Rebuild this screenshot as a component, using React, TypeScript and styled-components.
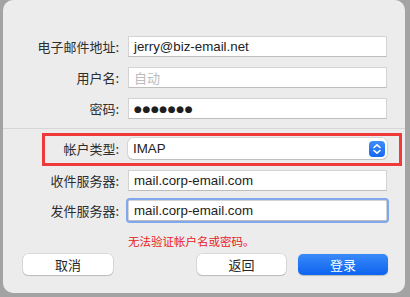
import styled, { createGlobalStyle } from "styled-components";

const GlobalStyle = createGlobalStyle`
  html, body {
    margin: 0;
    padding: 0;
    background: #a3a3a3;
  }
  body {
    font-family: "Liberation Sans", "Noto Sans CJK SC", sans-serif;
    font-size: 13px;
    color: #262626;
  }
`;

const Window = styled.div`
  width: 402px;
  height: 293px;
  margin-left: 3px;
  box-sizing: border-box;
  background: #ececec;
  border-radius: 10px;
  padding-top: 36px;
  display: flex;
  flex-direction: column;
`;

const Group = styled.div`
  display: flex;
  flex-direction: column;
  gap: ${(p: { gap: number }) => p.gap}px;
`;

const Row = styled.div<{ padRight?: number }>`
  display: grid;
  grid-template-columns: 1fr 259px;
  column-gap: 9px;
  align-items: center;
  padding-right: ${(p) => p.padRight ?? 18}px;
`;

const Label = styled.div`
  text-align: right;
  font-family: "Noto Sans CJK SC", sans-serif;
  font-size: 13px;
  line-height: 21px;
  color: #2e2e2e;
  white-space: nowrap;
`;

const Field = styled.div<{ focused?: boolean }>`
  height: 21px;
  box-sizing: border-box;
  background: #fff;
  border: 1px solid #d3d3d3;
  border-bottom-color: #bdbdbd;
  padding: 0 5px;
  display: flex;
  align-items: center;
  font-size: 13.3px;
  color: #222;
  white-space: nowrap;
  box-shadow: ${(p) => (p.focused ? "0 0 0 2px #7ea7ee" : "none")};
  border-radius: ${(p) => (p.focused ? "2px" : "0")};
`;

const Placeholder = styled.span`
  color: #bcbcbc;
  font-family: "Noto Sans CJK SC", sans-serif;
  font-size: 13px;
`;

const Dots = styled.span`
  font-family: "DejaVu Sans", sans-serif;
  font-size: 9px;
  letter-spacing: 0.6px;
  color: #1e1e1e;
`;

const Separator = styled.div`
  height: 1px;
  background: #d6d6d6;
  margin: 9px 0 4px;
`;

const Highlight = styled.div`
  margin-left: 39px;
  width: 360px;
  box-sizing: border-box;
  border: 3px solid #ee3a3a;
  padding: 2px 0 4px;
`;

const Select = styled.div`
  height: 21px;
  box-sizing: border-box;
  background: #fff;
  border-radius: 5px;
  box-shadow: 0 0 0 0.5px rgba(0, 0, 0, 0.18), 0 1px 1px rgba(0, 0, 0, 0.12);
  padding: 0 2px 0 5px;
  display: flex;
  align-items: center;
  justify-content: space-between;
  font-size: 13.3px;
  color: #222;
`;

const Stepper = styled.div`
  width: 16px;
  height: 16px;
  border-radius: 4px;
  background: linear-gradient(#3f8ef8, #1468f0);
  display: flex;
  align-items: center;
  justify-content: center;
`;

const Lower = styled(Group)`
  margin-top: 4px;
`;

const ErrorText = styled.div`
  margin: 12px 0 0 125px;
  font-family: "Noto Sans CJK SC", sans-serif;
  font-size: 11.5px;
  line-height: 16px;
  color: #e8221c;
`;

const Footer = styled.div`
  display: flex;
  align-items: center;
  gap: 12px;
  margin-top: 5px;
  padding: 0 17px 0 20px;
`;

const Button = styled.div<{ primary?: boolean; wide?: number }>`
  width: ${(p) => p.wide ?? 90}px;
  height: 21px;
  box-sizing: border-box;
  border-radius: 5px;
  display: flex;
  align-items: center;
  justify-content: center;
  font-family: "Noto Sans CJK SC", sans-serif;
  font-size: 13px;
  color: ${(p) => (p.primary ? "#fff" : "#262626")};
  background: ${(p) =>
    p.primary ? "linear-gradient(#3a8af8, #0d63ef)" : "#fff"};
  box-shadow: ${(p) =>
    p.primary
      ? "0 0.5px 1px rgba(0,0,0,0.2)"
      : "0 0 0 0.5px rgba(0,0,0,0.16), 0 1px 1px rgba(0,0,0,0.14)"};
`;

const Spacer = styled.div`
  flex: 1;
`;

export default function App() {
  return (
    <>
      <GlobalStyle />
      <Window>
        <Group gap={10}>
          <Row>
            <Label>电子邮件地址:</Label>
            <Field>jerry@biz-email.net</Field>
          </Row>
          <Row>
            <Label>用户名:</Label>
            <Field>
              <Placeholder>自动</Placeholder>
            </Field>
          </Row>
          <Row>
            <Label>密码:</Label>
            <Field>
              <Dots>●●●●●●●</Dots>
            </Field>
          </Row>
        </Group>
        <Separator />
        <Highlight>
          <Row padRight={12}>
            <Label>帐户类型:</Label>
            <Select>
              IMAP
              <Stepper>
                <svg width="10" height="12" viewBox="0 0 10 12">
                  <path
                    d="M2 4.5 L5 1.8 L8 4.5 M2 7.5 L5 10.2 L8 7.5"
                    fill="none"
                    stroke="#fff"
                    strokeWidth="1.6"
                    strokeLinecap="round"
                    strokeLinejoin="round"
                  />
                </svg>
              </Stepper>
            </Select>
          </Row>
        </Highlight>
        <Lower gap={9}>
          <Row>
            <Label>收件服务器:</Label>
            <Field>mail.corp-email.com</Field>
          </Row>
          <Row>
            <Label>发件服务器:</Label>
            <Field focused>mail.corp-email.com</Field>
          </Row>
        </Lower>
        <ErrorText>无法验证帐户名或密码。</ErrorText>
        <Footer>
          <Button>取消</Button>
          <Spacer />
          <Button wide={89}>返回</Button>
          <Button primary>登录</Button>
        </Footer>
      </Window>
    </>
  );
}
